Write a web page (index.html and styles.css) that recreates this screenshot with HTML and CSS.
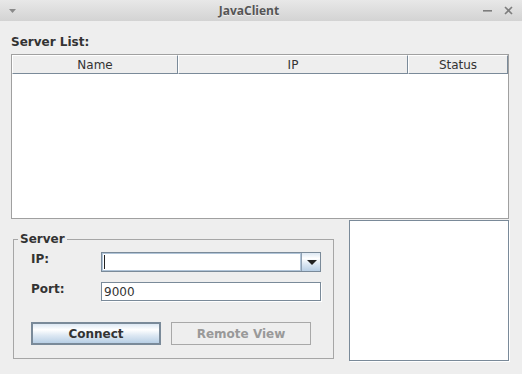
FILE: index.html
```html
<!DOCTYPE html>
<html>
<head>
<meta charset="utf-8">
<title>JavaClient</title>
<link rel="stylesheet" href="styles.css">
</head>
<body>
<div class="window">
  <div class="titlebar">
    <div class="tb-left">
      <svg width="7" height="4" viewBox="0 0 7 4"><polygon points="0,0 7,0 3.5,4" fill="#8a8a8a"/></svg>
    </div>
    <div class="tb-title">JavaClient</div>
    <div class="tb-right">
      <svg width="9" height="9" viewBox="0 0 9 9"><rect x="0" y="4" width="9" height="1.6" fill="#7d7d7d"/></svg>
      <svg width="9" height="9" viewBox="0 0 9 9"><path d="M1 1 L8 8 M8 1 L1 8" stroke="#7d7d7d" stroke-width="1.6" fill="none"/></svg>
    </div>
  </div>
  <div class="content">
    <div class="heading">Server List:</div>
    <div class="table">
      <div class="thead">
        <div class="th c1">Name</div>
        <div class="th c2">IP</div>
        <div class="th c3">Status</div>
      </div>
    </div>
    <div class="bottom">
      <fieldset class="group">
        <legend>Server</legend>
        <div class="form">
          <div class="row">
            <div class="label">IP:</div>
            <div class="combo">
              <div class="combo-field"><span class="caret"></span></div>
              <div class="combo-btn">
                <svg width="10" height="5" viewBox="0 0 10 5"><polygon points="0,0 10,0 5,5" fill="#222"/></svg>
              </div>
            </div>
          </div>
          <div class="row">
            <div class="label">Port:</div>
            <div class="textfield">9000</div>
          </div>
          <div class="buttons">
            <button class="btn primary">Connect</button>
            <button class="btn disabled" disabled>Remote View</button>
          </div>
        </div>
      </fieldset>
      <div class="side"></div>
    </div>
  </div>
</div>
</body>
</html>
```

FILE: styles.css
```css
html, body {
  margin: 0;
  padding: 0;
}
body {
  width: 522px;
  height: 374px;
  overflow: hidden;
  background: #eeeeee;
  font-family: "DejaVu Sans", sans-serif;
  font-size: 12px;
  color: #333333;
}
.titlebar {
  height: 21px;
  display: flex;
  align-items: center;
  background: linear-gradient(#e8e8e8, #d3d3d3);
}
.tb-left {
  width: 24px;
  box-sizing: border-box;
  padding-left: 9px;
  display: flex;
  align-items: center;
}
.tb-left svg { display: block; margin-top: 0; }
.tb-title {
  flex: 1;
  text-align: center;
  font-family: "Open Sans", sans-serif;
  font-weight: bold;
  font-size: 12px;
  line-height: 21px;
  color: #555555;
  text-shadow: 0 1px 0 rgba(255,255,255,0.6);
}
.tb-right {
  width: 48px;
  box-sizing: border-box;
  padding-left: 9px;
  display: flex;
  align-items: center;
  gap: 12px;
}
.tb-right svg { display: block; }
.content {
  padding-left: 11px;
}
.heading {
  margin-top: 14px;
  line-height: 14px;
  font-weight: bold;
  color: #333333;
}
.table {
  margin-top: 5px;
  width: 498px;
  height: 165px;
  box-sizing: border-box;
  border: 1px solid #a0a0a0;
  background: #ffffff;
}
.thead {
  display: flex;
  background: #eeeeee;
}
.th {
  box-sizing: border-box;
  padding: 2px 0 1px;
  line-height: 14px;
  text-align: center;
  border-top: 1px solid #ffffff;
  border-left: 1px solid #ffffff;
  border-right: 1px solid #7a8a99;
  border-bottom: 1px solid #7a8a99;
  color: #333333;
}
.c1 { width: 166px; }
.c2 { width: 230px; }
.c3 { width: 100px; }
.bottom {
  display: flex;
  align-items: flex-start;
  padding-left: 2px;
}
.group {
  margin: 13px 0 0 0;
  padding: 6px 0 13px 0;
  width: 321px;
  box-sizing: border-box;
  border: 1px solid #a6a6a6;
  min-width: 0;
}
.group legend {
  margin-left: 4px;
  padding: 0 2px;
  font-weight: bold;
  line-height: 14px;
  color: #333333;
}
.form {
  padding-left: 17px;
}
.row {
  display: flex;
  align-items: flex-start;
}
.row + .row {
  margin-top: 10px;
}
.label {
  width: 70px;
  line-height: 14px;
  font-weight: bold;
  color: #333333;
}
.combo {
  width: 220px;
  height: 20px;
  box-sizing: border-box;
  display: flex;
  border: 1px solid #7a8a99;
  background: #ffffff;
}
.combo-field {
  flex: 1;
  box-sizing: border-box;
  box-shadow: inset 0 0 0 1px #b0c4d8;
  padding: 2px 0 0 2px;
}
.caret {
  display: block;
  width: 1px;
  height: 14px;
  background: #222222;
}
.combo-btn {
  width: 19px;
  box-sizing: border-box;
  border-left: 1px solid #8fa0b2;
  background: linear-gradient(#dde8f3 0%, #ffffff 30%, #dde8f3 60%, #b8cfe5 100%);
  display: flex;
  align-items: center;
  justify-content: center;
}
.combo-btn svg { display: block; margin-left: 1px; }
.textfield {
  width: 220px;
  height: 19px;
  box-sizing: border-box;
  border: 1px solid #7a8a99;
  box-shadow: 1px 1px 0 #ffffff;
  background: #ffffff;
  padding: 2px 0 0 2px;
  line-height: 14px;
  color: #333333;
}
.buttons {
  margin-top: 21px;
  display: flex;
  gap: 10px;
}
.btn {
  height: 23px;
  box-sizing: border-box;
  padding: 0;
  margin: 0;
  font-family: "DejaVu Sans", sans-serif;
  font-size: 12px;
  font-weight: bold;
  line-height: 14px;
}
.primary {
  width: 130px;
  border: 2px solid #7a8a99;
  background: linear-gradient(#dde8f3 0%, #ffffff 30%, #dde8f3 60%, #b8cfe5 100%);
  color: #333333;
}
.disabled {
  width: 140px;
  border: 1px solid #a8a8a8;
  background: transparent;
  color: #999999;
}
.side {
  margin: 1px 0 0 15px;
  width: 160px;
  height: 141px;
  box-sizing: border-box;
  border: 1px solid #7a8a99;
  box-shadow: 1px 1px 0 #ffffff;
  background: #ffffff;
}
```
